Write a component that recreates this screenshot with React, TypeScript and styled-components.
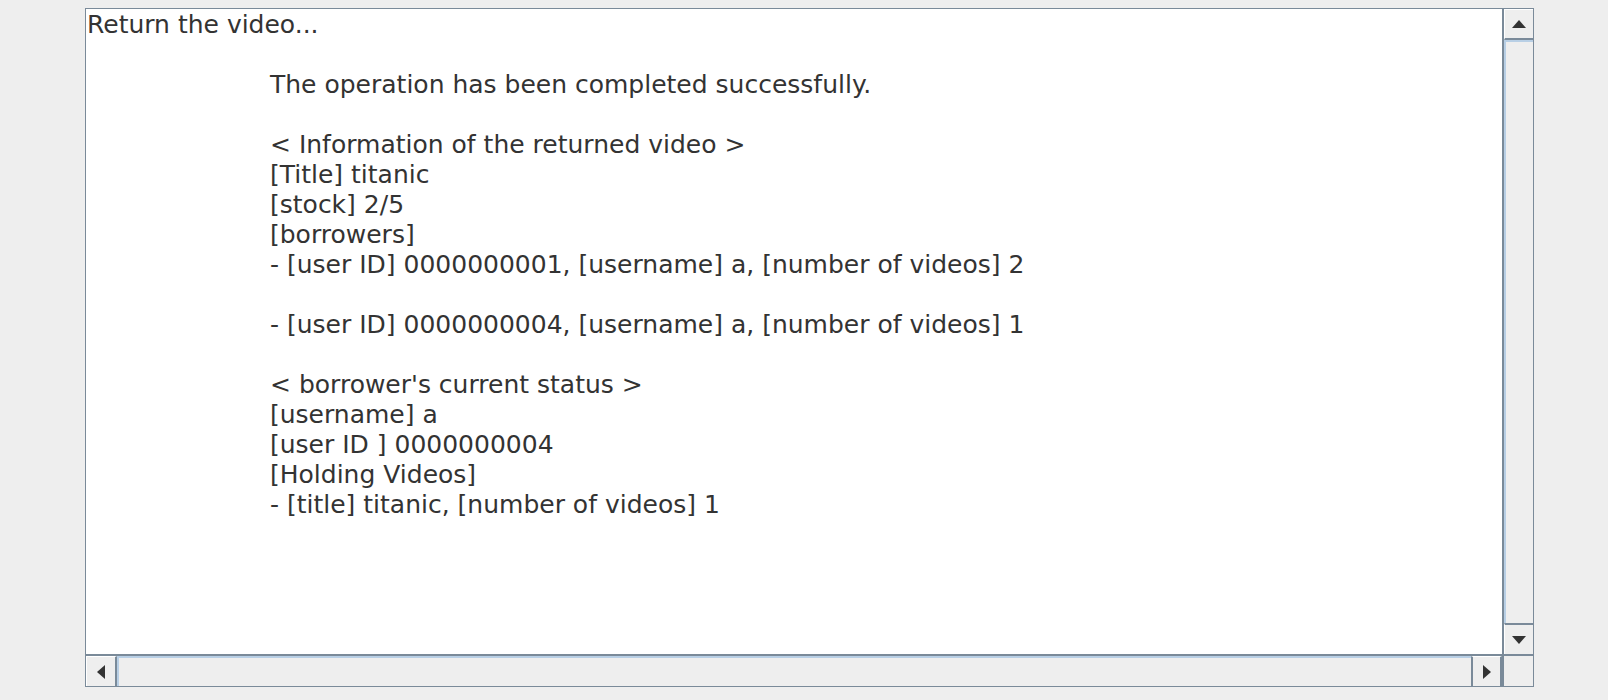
import { FC } from "react";
import styled, { createGlobalStyle } from "styled-components";

const GlobalStyle = createGlobalStyle`
  html, body {
    margin: 0;
    padding: 0;
    background: #eeeeee;
  }
`;

const BORDER = "#7a8a99";
const TRACK_SHADOW = "#b8cfe5";

const Frame = styled.div`
  box-sizing: border-box;
  margin: 8px 0 0 85px;
  width: 1449px;
  height: 679px;
  border: 1px solid ${BORDER};
  display: grid;
  grid-template-columns: 1fr 31px;
  grid-template-rows: 1fr 32px;
  background: #eeeeee;
`;

const Viewport = styled.div`
  background: #ffffff;
  overflow: hidden;
  padding: 1px 0 0 1px;
  font-family: "DejaVu Sans", "Liberation Sans", sans-serif;
  font-size: 25px;
  line-height: 30px;
  color: #333333;
  white-space: pre;
`;

const Line = styled.div<{ $indent?: boolean }>`
  height: 30px;
  padding-left: ${(p) => (p.$indent ? "183px" : "0")};
`;

const VScroll = styled.div`
  box-sizing: border-box;
  border-left: 2px solid ${BORDER};
  display: flex;
  flex-direction: column;
`;

const HScroll = styled.div`
  box-sizing: border-box;
  border-top: 2px solid ${BORDER};
  display: flex;
`;

const Corner = styled.div`
  box-sizing: border-box;
  border-top: 2px solid ${BORDER};
  border-left: 2px solid ${BORDER};
  background: #eeeeee;
`;

const Button = styled.div<{ $side: "top" | "bottom" | "left" | "right" }>`
  box-sizing: border-box;
  flex: 0 0 31px;
  display: flex;
  align-items: center;
  justify-content: center;
  background: #eeeeee;
  border-top: 1px solid #ffffff;
  border-left: 1px solid #ffffff;
  ${(p) => p.$side === "top" && `border-bottom: 2px solid ${BORDER};`}
  ${(p) => p.$side === "bottom" && `border-top: 2px solid ${BORDER};`}
  ${(p) => p.$side === "left" && `border-right: 2px solid ${BORDER};`}
  ${(p) => p.$side === "right" && `border-left: 2px solid ${BORDER}; border-right: 2px solid ${BORDER};`}
`;

const Track = styled.div`
  flex: 1;
  background: #eeeeee;
  box-shadow: inset 2px 2px 0 ${TRACK_SHADOW};
`;

const Arrow: FC<{ dir: "up" | "down" | "left" | "right" }> = ({ dir }) => {
  const horizontal = dir === "left" || dir === "right";
  const w = horizontal ? 8 : 14;
  const h = horizontal ? 14 : 8;
  const points = {
    up: "7,0 14,8 0,8",
    down: "0,0 14,0 7,8",
    left: "8,0 8,14 0,7",
    right: "0,0 8,7 0,14",
  }[dir];
  return (
    <svg width={w} height={h} viewBox={`0 0 ${w} ${h}`}>
      <polygon points={points} fill="#333333" />
    </svg>
  );
};

const lines: { text: string; indent?: boolean }[] = [
  { text: "Return the video..." },
  { text: "" },
  { text: "The operation has been completed successfully.", indent: true },
  { text: "" },
  { text: "< Information of the returned video >", indent: true },
  { text: "[Title] titanic", indent: true },
  { text: "[stock] 2/5", indent: true },
  { text: "[borrowers]", indent: true },
  { text: "- [user ID] 0000000001, [username] a, [number of videos] 2", indent: true },
  { text: "" },
  { text: "- [user ID] 0000000004, [username] a, [number of videos] 1", indent: true },
  { text: "" },
  { text: "< borrower's current status >", indent: true },
  { text: "[username] a", indent: true },
  { text: "[user ID ] 0000000004", indent: true },
  { text: "[Holding Videos]", indent: true },
  { text: "- [title] titanic, [number of videos] 1", indent: true },
];

const App: FC = () => {
  return (
    <>
      <GlobalStyle />
      <Frame>
        <Viewport>
          {lines.map((l, i) => (
            <Line key={i} $indent={l.indent}>
              {l.text}
            </Line>
          ))}
        </Viewport>
        <VScroll>
          <Button $side="top">
            <Arrow dir="up" />
          </Button>
          <Track />
          <Button $side="bottom">
            <Arrow dir="down" />
          </Button>
        </VScroll>
        <HScroll>
          <Button $side="left">
            <Arrow dir="left" />
          </Button>
          <Track />
          <Button $side="right">
            <Arrow dir="right" />
          </Button>
        </HScroll>
        <Corner />
      </Frame>
    </>
  );
};

export default App;
